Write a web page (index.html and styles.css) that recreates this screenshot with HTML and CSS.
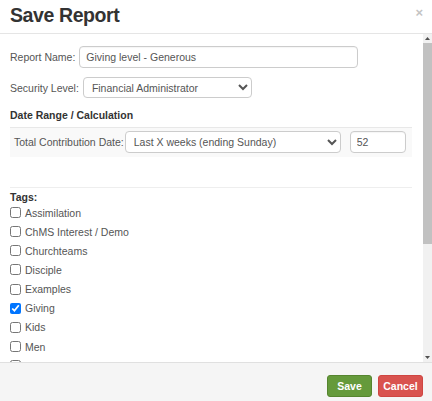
FILE: index.html
```html
<!DOCTYPE html>
<html lang="en">
<head>
<meta charset="utf-8">
<title>Save Report</title>
<link rel="stylesheet" href="styles.css">
</head>
<body>
<div class="modal">
  <div class="modal-header">
    <h1 class="title">Save Report</h1>
    <button class="close" type="button">×</button>
  </div>
  <div class="body-wrap">
    <div class="modal-body">
      <div class="field">
        <label class="lbl">Report Name:</label>
        <input class="text name-input" type="text" value="Giving level - Generous">
      </div>
      <div class="field field-sec">
        <label class="lbl">Security Level:</label>
        <select class="sel sec-sel"><option>Financial Administrator</option></select>
      </div>
      <div class="section-title">Date Range / Calculation</div>
      <div class="calc-row">
        <label class="lbl">Total Contribution Date:</label>
        <select class="sel range-sel"><option>Last X weeks (ending Sunday)</option></select>
        <input class="text num-input" type="text" value="52">
      </div>
      <div class="divider"></div>
      <div class="tags-title">Tags:</div>
      <ul class="tags">
        <li><label class="tag"><input type="checkbox" class="cb">Assimilation</label></li>
        <li><label class="tag"><input type="checkbox" class="cb">ChMS Interest / Demo</label></li>
        <li><label class="tag"><input type="checkbox" class="cb">Churchteams</label></li>
        <li><label class="tag"><input type="checkbox" class="cb">Disciple</label></li>
        <li><label class="tag"><input type="checkbox" class="cb">Examples</label></li>
        <li><label class="tag"><input type="checkbox" class="cb" checked>Giving</label></li>
        <li><label class="tag"><input type="checkbox" class="cb">Kids</label></li>
        <li><label class="tag"><input type="checkbox" class="cb">Men</label></li>
        <li><label class="tag"><input type="checkbox" class="cb">Newsletter</label></li>
        <li><label class="tag"><input type="checkbox" class="cb">Outreach</label></li>
        <li><label class="tag"><input type="checkbox" class="cb">Prayer</label></li>
        <li><label class="tag"><input type="checkbox" class="cb">Small Groups</label></li>
        <li><label class="tag"><input type="checkbox" class="cb">Staff</label></li>
        <li><label class="tag"><input type="checkbox" class="cb">Students</label></li>
        <li><label class="tag"><input type="checkbox" class="cb">Volunteers</label></li>
        <li><label class="tag"><input type="checkbox" class="cb">Women</label></li>
        <li><label class="tag"><input type="checkbox" class="cb">Youth</label></li>
      </ul>
    </div>
    <div class="scrollbar" aria-hidden="true">
      <div class="sb-btn">
        <svg width="5" height="3" viewBox="0 0 5 3"><polygon points="2.5,0 5,3 0,3" fill="#505050"/></svg>
      </div>
      <div class="sb-track"><div class="sb-thumb"></div></div>
      <div class="sb-btn">
        <svg width="5" height="3" viewBox="0 0 5 3"><polygon points="0,0 5,0 2.5,3" fill="#505050"/></svg>
      </div>
    </div>
  </div>
  <div class="modal-footer">
    <button class="btn btn-save" type="button">Save</button>
    <button class="btn btn-cancel" type="button">Cancel</button>
  </div>
</div>
</body>
</html>
```
FILE: styles.css
```css
* { box-sizing: border-box; }

html, body {
  margin: 0;
  padding: 0;
  background: #fff;
  overflow: hidden;
}

body {
  font-family: "Liberation Sans", Arial, sans-serif;
  font-size: 10.5px;
  color: #555;
}

.modal {
  width: 432px;
  height: 401px;
  display: flex;
  flex-direction: column;
  background: #fff;
}

.modal-header {
  height: 34px;
  flex: 0 0 34px;
  padding: 3px 9px 0 10px;
  border-bottom: 1px solid #e5e5e5;
  display: flex;
  justify-content: space-between;
  align-items: flex-start;
}

.title {
  margin: 0;
  font-size: 19.5px;
  line-height: 24px;
  font-weight: bold;
  letter-spacing: -0.4px;
  color: #333;
}

.close {
  margin: 3px 0 0 0;
  padding: 0;
  border: 0;
  background: transparent;
  font-family: "Liberation Sans", Arial, sans-serif;
  font-size: 13px;
  line-height: 13px;
  font-weight: bold;
  color: #c4c4c4;
}

.body-wrap {
  flex: 1 1 auto;
  min-height: 0;
  display: flex;
}

.modal-body {
  flex: 1 1 auto;
  min-width: 0;
  overflow: hidden;
  padding: 12px 11px 10px 10px;
}

.scrollbar {
  flex: 0 0 9px;
  width: 9px;
  background: #f1f1f1;
  display: flex;
  flex-direction: column;
}

.sb-btn {
  flex: 0 0 9px;
  height: 9px;
  display: flex;
  align-items: center;
  justify-content: center;
}

.sb-btn svg { display: block; }

.sb-track {
  flex: 1 1 auto;
}

.sb-thumb {
  height: 201px;
  background: #c1c1c1;
}

.field {
  display: flex;
  align-items: center;
  height: 22px;
}

.field-sec {
  margin-top: 9px;
  height: 21px;
}

.lbl {
  color: #555;
  white-space: nowrap;
}

.text, .sel {
  font-family: "Liberation Sans", Arial, sans-serif;
  font-size: 10.5px;
  color: #555;
  background: #fff;
  border: 1px solid #ccc;
  border-radius: 4px;
  height: 22px;
  margin: 0;
  outline: none;
}

.text {
  padding: 0 6px;
  box-shadow: inset 0 1px 1px rgba(0, 0, 0, 0.04);
}

.name-input {
  margin-left: 4px;
  width: 279px;
}

.sel {
  padding: 0 4px;
}

.sec-sel {
  margin-left: 4px;
  width: 169px;
  height: 21px;
}

.section-title {
  margin-top: 10px;
  line-height: 14px;
  font-weight: bold;
  color: #333;
}

.calc-row {
  margin-top: 5px;
  height: 30px;
  padding: 3px 0 0 4px;
  border-top: 1px solid #e8e8e8;
  background: #f9f9f9;
  display: flex;
  align-items: flex-start;
}

.calc-row .lbl {
  line-height: 22px;
}

.range-sel {
  margin-left: 1px;
  width: 216px;
}

.num-input {
  margin-left: 9px;
  width: 56px;
}

.divider {
  margin-top: 30px;
  height: 1px;
  background: #eee;
}

.tags-title {
  margin-top: 3px;
  line-height: 13px;
  font-weight: bold;
  color: #333;
}

.tags {
  list-style: none;
  margin: -1px 0 0 0;
  padding: 0;
}

.tags li {
  height: 19.15px;
  display: flex;
  align-items: center;
}

.tag {
  display: flex;
  align-items: center;
  color: #555;
}

.cb {
  width: 11px;
  height: 11px;
  margin: 0 4px 0 0;
}

.modal-footer {
  flex: 0 0 39px;
  height: 39px;
  border-top: 1px solid #e0e0e0;
  background: #f5f5f5;
  padding: 12px 9px 4px 0;
  display: flex;
  justify-content: flex-end;
  align-items: flex-start;
  gap: 6px;
}

.btn {
  width: 45px;
  height: 22px;
  border-radius: 3px;
  font-family: "Liberation Sans", Arial, sans-serif;
  font-size: 10.5px;
  font-weight: bold;
  color: #fff;
  padding: 0;
  margin: 0;
}

.btn-save {
  background: #659a3b;
  border: 1px solid #56852f;
}

.btn-cancel {
  background: #d9534f;
  border: 1px solid #cf4642;
}
```
